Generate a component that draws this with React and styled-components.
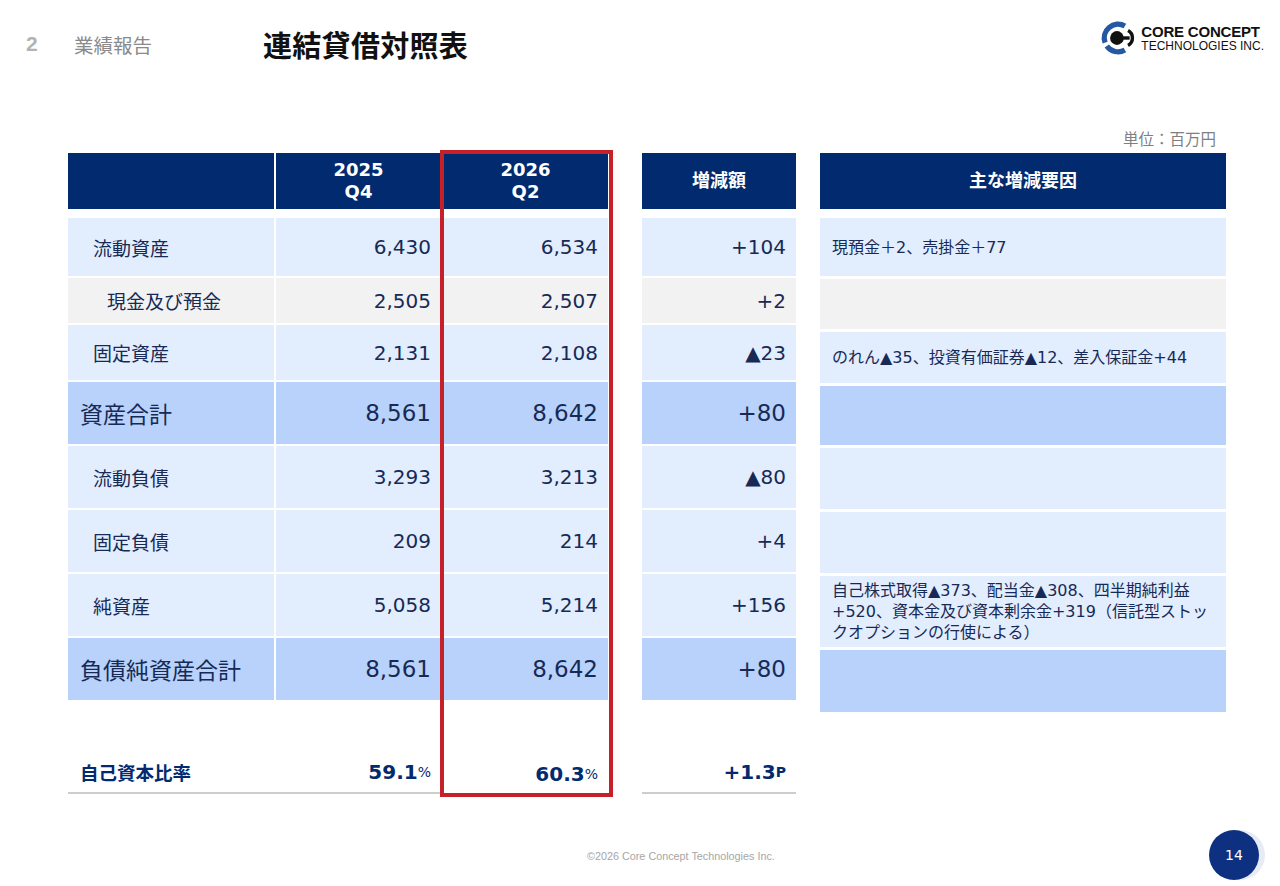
import React from 'react';
import styled, { createGlobalStyle } from 'styled-components';

const GlobalStyle = createGlobalStyle`
    html, body {
        margin: 0;
        padding: 0;
        background: #ffffff;
    }
    body {
        font-family: "DejaVu Sans", "Noto Sans CJK JP", sans-serif;
    }
`;

const NAVY = '#022a6e';
const TEXT = '#172a56';

const Page = styled.div`
    width: 1280px;
    height: 886px;
    display: flex;
    flex-direction: column;
    overflow: hidden;
    background: #fff;
`;

const TopBar = styled.div`
    height: 88px;
    display: flex;
    align-items: center;
    padding: 0 16px 0 26px;
`;

const SectionNo = styled.div`
    width: 48px;
    font-family: "Liberation Sans", sans-serif;
    font-weight: 700;
    font-size: 21px;
    color: #b3b3b3;
`;

const SectionName = styled.div`
    width: 189px;
    font-family: "Noto Sans CJK JP", sans-serif;
    font-size: 19.5px;
    color: #8a8a8a;
`;

const Title = styled.h1`
    margin: 0;
    font-family: "Noto Sans CJK JP", sans-serif;
    font-size: 29px;
    font-weight: 700;
    color: #111;
    letter-spacing: 0.3px;
`;

const Logo = styled.div`
    margin-left: auto;
    margin-top: -12px;
    display: flex;
    align-items: center;
    gap: 5px;
`;

const LogoText = styled.div`
    display: flex;
    flex-direction: column;
    font-family: "Liberation Sans", sans-serif;
    color: #111;
    line-height: 1;
`;

const LogoMain = styled.span`
    font-weight: 700;
    font-size: 15px;
    letter-spacing: -0.2px;
`;

const LogoSub = styled.span`
    font-size: 12px;
    margin-top: 1px;
`;

const UnitRow = styled.div`
    margin-top: 40px;
    height: 20px;
    padding-right: 64px;
    text-align: right;
    font-family: "Noto Sans CJK JP", sans-serif;
    font-size: 15.5px;
    color: #7f7f7f;
    line-height: 20px;
`;

const Tables = styled.div`
    margin-top: 5px;
    padding-left: 68px;
    display: flex;
    align-items: flex-start;
`;

const LeftGrid = styled.div`
    position: relative;
    display: grid;
    grid-template-columns: 206px 165px 165px 30px 154px;
    column-gap: 2px;
    row-gap: 2px;
`;

const Highlight = styled.div`
    position: absolute;
    left: 372px;
    top: -3px;
    width: 173px;
    height: 647px;
    border: 4px solid #c4212b;
    box-sizing: border-box;
    pointer-events: none;
`;

const HeadCell = styled.div`
    height: 56px;
    margin-bottom: 7px;
    background: ${NAVY};
    color: #fff;
    display: flex;
    align-items: center;
    justify-content: center;
    text-align: center;
    font-family: "DejaVu Sans", "Noto Sans CJK JP", sans-serif;
    font-weight: 700;
    font-size: 18px;
    line-height: 22px;
`;

const Spacer = styled.div``;

const toneColor = {
    light: '#e2edfd',
    gray: '#f2f2f2',
    total: '#b8d2fb',
};

const Cell = styled.div`
    height: ${(p) => p.$h}px;
    background: ${(p) => toneColor[p.$tone]};
    display: flex;
    align-items: center;
    box-sizing: border-box;
    color: ${TEXT};
`;

const LabelCell = styled(Cell)`
    padding-left: ${(p) => [12, 25, 39][p.$indent]}px;
    font-family: "Noto Sans CJK JP", sans-serif;
    font-size: ${(p) => (p.$tone === 'total' ? 23 : 19)}px;
`;

const NumCell = styled(Cell)`
    justify-content: flex-end;
    padding-right: 10px;
    font-size: ${(p) => (p.$tone === 'total' ? 23 : 20)}px;
`;

const RatioCell = styled.div`
    height: 92px;
    box-sizing: border-box;
    border-bottom: ${(p) => (p.$line ? '2px solid #cdcdcd' : 'none')};
    margin-right: ${(p) => (p.$left ? -2 : 0)}px;
    display: flex;
    align-items: flex-end;
    justify-content: ${(p) => (p.$left ? 'flex-start' : 'flex-end')};
    padding: 0 10px 9px ${(p) => (p.$left ? 12 : 0)}px;
    color: ${NAVY};
    font-weight: 700;
    line-height: 22px;
`;

const RatioLabel = styled.span`
    font-family: "Noto Sans CJK JP", sans-serif;
    font-size: 18.5px;
    font-weight: 700;
`;

const RatioValue = styled.span`
    font-size: 20px;
    font-weight: 700;
`;

const RatioUnit = styled.span`
    font-size: 14px;
    font-weight: ${(p) => (p.$bold ? 700 : 400)};
`;

const Reasons = styled.div`
    margin-left: 24px;
    width: 406px;
    display: flex;
    flex-direction: column;
    gap: 3px;
`;

const ReasonHead = styled(HeadCell)`
    margin-bottom: 6px;
`;

const ReasonCell = styled.div`
    height: ${(p) => p.$h}px;
    background: ${(p) => toneColor[p.$tone]};
    display: flex;
    flex-direction: column;
    justify-content: center;
    padding-left: 12px;
    font-family: "DejaVu Sans", "Noto Sans CJK JP", sans-serif;
    font-size: 16px;
    line-height: 21px;
    color: ${TEXT};
    white-space: nowrap;
`;

const Footer = styled.div`
    margin-top: auto;
    height: 54px;
    padding: 0 21px 4px 587px;
    display: flex;
    align-items: center;
`;

const Copyright = styled.div`
    font-family: "Liberation Sans", sans-serif;
    font-size: 10.8px;
    color: #a6a6a6;
    margin-top: 2px;
`;

const PageBadge = styled.div`
    margin-left: auto;
    width: 50px;
    height: 50px;
    border-radius: 50%;
    background: #0d3180;
    color: #fff;
    display: flex;
    align-items: center;
    justify-content: center;
    font-size: 14px;
    box-shadow: 6px 0 0 #e6ebf4;
`;

const rows = [
    { label: '流動資産', indent: 1, q4: '6,430', q2: '6,534', d: '+104', tone: 'light', h: 58 },
    { label: '現金及び預金', indent: 2, q4: '2,505', q2: '2,507', d: '+2', tone: 'gray', h: 45 },
    { label: '固定資産', indent: 1, q4: '2,131', q2: '2,108', d: '▲23', tone: 'light', h: 55 },
    { label: '資産合計', indent: 0, q4: '8,561', q2: '8,642', d: '+80', tone: 'total', h: 62 },
    { label: '流動負債', indent: 1, q4: '3,293', q2: '3,213', d: '▲80', tone: 'light', h: 62 },
    { label: '固定負債', indent: 1, q4: '209', q2: '214', d: '+4', tone: 'light', h: 62 },
    { label: '純資産', indent: 1, q4: '5,058', q2: '5,214', d: '+156', tone: 'light', h: 62 },
    { label: '負債純資産合計', indent: 0, q4: '8,561', q2: '8,642', d: '+80', tone: 'total', h: 62 },
];

const reasons = [
    { lines: ['現預金＋2、売掛金＋77'], tone: 'light', h: 58 },
    { lines: [], tone: 'gray', h: 50 },
    { lines: ['のれん▲35、投資有価証券▲12、差入保証金+44'], tone: 'light', h: 51 },
    { lines: [], tone: 'total', h: 59 },
    { lines: [], tone: 'light', h: 61 },
    { lines: [], tone: 'light', h: 61 },
    {
        lines: [
            '自己株式取得▲373、配当金▲308、四半期純利益',
            '+520、資本金及び資本剰余金+319（信託型ストッ',
            'クオプションの行使による）',
        ],
        tone: 'light',
        h: 71,
    },
    { lines: [], tone: 'total', h: 62 },
];

function LogoMark() {
    return (
        <svg width="36" height="36" viewBox="0 0 34 34">
            <path d="M23.5 5.7 A13 13 0 0 0 4.8 21.4" fill="none" stroke="#2557a3" strokeWidth="5" />
            <path d="M6.4 24.5 A13 13 0 0 0 23.5 28.3" fill="none" stroke="#2557a3" strokeWidth="5" />
            <circle cx="16" cy="17" r="6.5" fill="#111" />
            <rect x="16" y="15.4" width="12" height="3.2" fill="#111" />
            <path d="M26.5 10 A8 8 0 0 1 26.5 24" fill="none" stroke="#111" strokeWidth="3.2" />
        </svg>
    );
}

export default function App() {
    return (
        <Page>
            <GlobalStyle />
            <TopBar>
                <SectionNo>2</SectionNo>
                <SectionName>業績報告</SectionName>
                <Title>連結貸借対照表</Title>
                <Logo>
                    <LogoMark />
                    <LogoText>
                        <LogoMain>CORE CONCEPT</LogoMain>
                        <LogoSub>TECHNOLOGIES INC.</LogoSub>
                    </LogoText>
                </Logo>
            </TopBar>
            <UnitRow>単位：百万円</UnitRow>
            <Tables>
                <LeftGrid>
                    <HeadCell />
                    <HeadCell>2025<br />Q4</HeadCell>
                    <HeadCell>2026<br />Q2</HeadCell>
                    <Spacer />
                    <HeadCell>増減額</HeadCell>
                    {rows.map((r) => (
                        <React.Fragment key={r.label}>
                            <LabelCell $h={r.h} $tone={r.tone} $indent={r.indent}>{r.label}</LabelCell>
                            <NumCell $h={r.h} $tone={r.tone}>{r.q4}</NumCell>
                            <NumCell $h={r.h} $tone={r.tone}>{r.q2}</NumCell>
                            <Spacer />
                            <NumCell $h={r.h} $tone={r.tone}>{r.d}</NumCell>
                        </React.Fragment>
                    ))}
                    <RatioCell $left $line><RatioLabel>自己資本比率</RatioLabel></RatioCell>
                    <RatioCell $line><RatioValue>59.1</RatioValue><RatioUnit>%</RatioUnit></RatioCell>
                    <RatioCell><RatioValue>60.3</RatioValue><RatioUnit>%</RatioUnit></RatioCell>
                    <Spacer />
                    <RatioCell $line><RatioValue>+1.3</RatioValue><RatioUnit $bold>P</RatioUnit></RatioCell>
                    <Highlight />
                </LeftGrid>
                <Reasons>
                    <ReasonHead>主な増減要因</ReasonHead>
                    {reasons.map((r, i) => (
                        <ReasonCell key={i} $h={r.h} $tone={r.tone}>
                            {r.lines.map((l) => (
                                <span key={l}>{l}</span>
                            ))}
                        </ReasonCell>
                    ))}
                </Reasons>
            </Tables>
            <Footer>
                <Copyright>©2026 Core Concept Technologies Inc.</Copyright>
                <PageBadge>14</PageBadge>
            </Footer>
        </Page>
    );
}
